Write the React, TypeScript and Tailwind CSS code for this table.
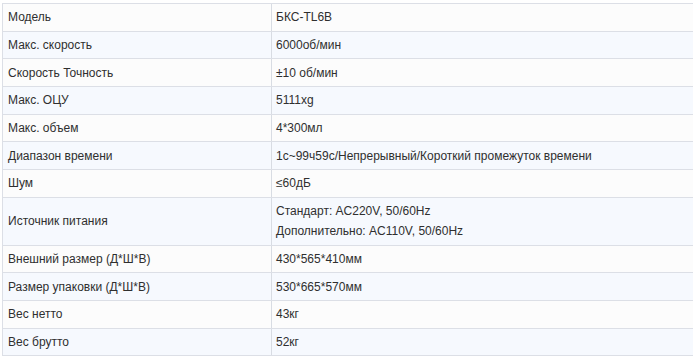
const rows: [string, string[]][] = [
  ["Модель", ["БКС-TL6B"]],
  ["Макс. скорость", ["6000об/мин"]],
  ["Скорость Точность", ["±10 об/мин"]],
  ["Макс. ОЦУ", ["5111xg"]],
  ["Макс. объем", ["4*300мл"]],
  ["Диапазон времени", ["1с~99ч59с/Непрерывный/Короткий промежуток времени"]],
  ["Шум", ["≤60дБ"]],
  ["Источник питания", ["Стандарт: AC220V, 50/60Hz", "Дополнительно: AC110V, 50/60Hz"]],
  ["Внешний размер (Д*Ш*В)", ["430*565*410мм"]],
  ["Размер упаковки (Д*Ш*В)", ["530*665*570мм"]],
  ["Вес нетто", ["43кг"]],
  ["Вес брутто", ["52кг"]],
];

export default function App() {
  return (
    <div className="w-[693px] h-[358px] overflow-hidden bg-white pt-[3px] pl-[2px]">
      <div
        className="w-[720px] border-t border-l border-[#dcdfe6] text-[12px] text-[#2f2f2f]"
        style={{ fontFamily: '"Liberation Sans", Arial, sans-serif' }}
      >
        {rows.map(([label, values], i) => (
          <div
            key={label}
            className={`flex border-b border-[#dcdfe6] ${i % 2 === 0 ? "bg-[#fcfcfc]" : "bg-[#f6f9fe]"}`}
          >
            <div className="w-[269px] shrink-0 border-r border-[#d8dce3] px-[5px] py-[3.35px] leading-[20px] flex items-center">
              {label}
            </div>
            <div className="flex-1 px-[4px] py-[3.35px] leading-[20px]">
              {values.map((v) => (
                <div key={v}>{v}</div>
              ))}
            </div>
          </div>
        ))}
      </div>
    </div>
  );
}
